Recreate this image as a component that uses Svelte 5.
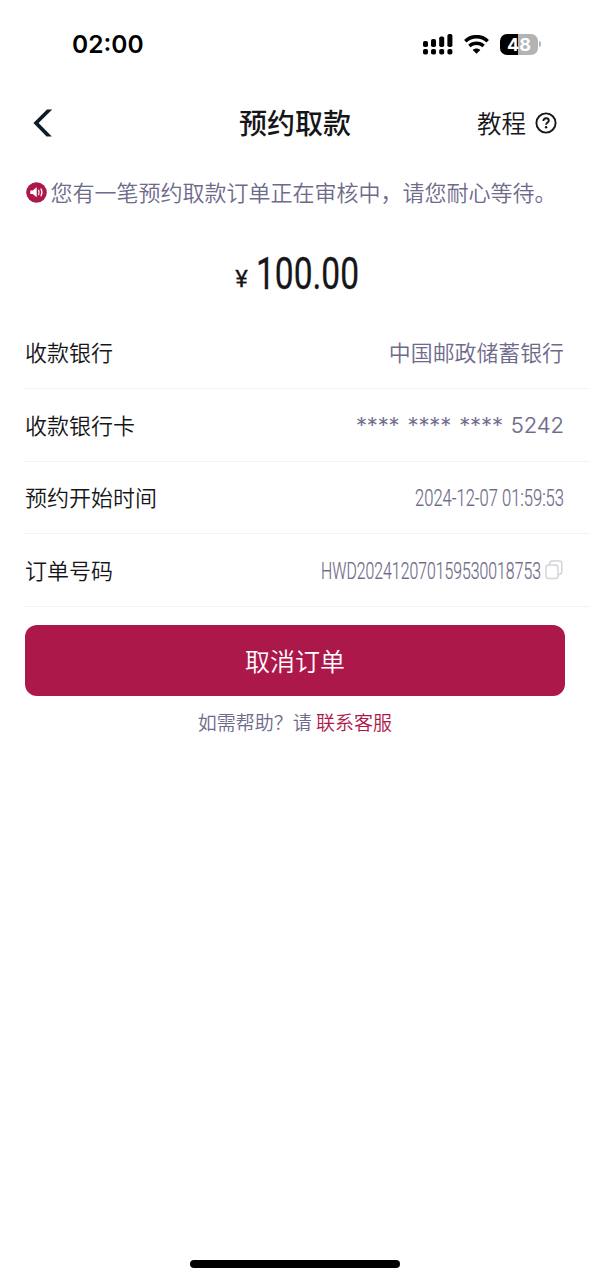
<script>
  const bank = '中国邮政储蓄银行'
  const card = { groups: ['****', '****', '****'], last: '5242' }
  const startTime = '2024-12-07 01:59:53'
  const orderNo = 'HWD202412070159530018753'
</script>

{#snippet condensed(text, width, size, weight)}
  <svg class="condensed" {width} height={size * 1.4} viewBox="0 0 {width} {size * 1.4}">
    <text
      x="0"
      y={size * 1.08}
      font-size={size}
      font-weight={weight}
      textLength={width}
      lengthAdjust="spacingAndGlyphs">{text}</text>
  </svg>
{/snippet}

<div class="page">
  <div class="status">
    <span class="clock">02:00</span>
    <div class="indicators">
      <svg class="signal" width="30" height="21" viewBox="0 0 30 21">
        <rect x="0" y="7" width="5" height="6" rx="1.8" />
        <rect x="8" y="5" width="5" height="8" rx="1.8" />
        <rect x="16.2" y="2.5" width="5" height="10.5" rx="1.8" />
        <rect x="24.4" y="0" width="5" height="13" rx="1.8" />
        <rect x="0" y="15" width="5" height="5.5" rx="1.8" />
        <rect x="8" y="15" width="5" height="5.5" rx="1.8" />
        <rect x="16.2" y="15" width="5" height="5.5" rx="1.8" />
        <rect x="24.4" y="15" width="5" height="5.5" rx="1.8" />
      </svg>
      <svg class="wifi" width="25" height="19" viewBox="0 0 25 19">
        <path d="M1.3 6.2C7.6.1 17.4.1 23.7 6.2" />
        <path d="M5.4 11c4-3.8 10.2-3.8 14.2 0" />
        <path class="dot" d="M12.5 18.8 8.7 15c2.1-2 5.5-2 7.6 0z" />
      </svg>
      <div class="battery"><span>48</span></div>
      <i class="cap"></i>
    </div>
  </div>

  <header>
    <button class="back" aria-label="返回">
      <svg width="20" height="28" viewBox="0 0 20 28">
        <path d="M14 .5h5.2L5.6 14l13.2 13.5h-5.2L.4 14z" />
      </svg>
    </button>
    <h1>预约取款</h1>
    <button class="guide">
      <span>教程</span>
      <svg width="22" height="22" viewBox="0 0 22 22">
        <circle cx="11" cy="11" r="9.6" />
        <path d="M8.4 8.9c0-1.6 1.1-2.6 2.7-2.6s2.7 1 2.7 2.4c0 1.8-2.7 1.9-2.7 4.1" />
        <circle class="dot" cx="11.1" cy="15.3" r="1.2" />
      </svg>
    </button>
  </header>

  <div class="notice">
    <svg width="21" height="21" viewBox="0 0 21 21">
      <circle cx="10.5" cy="10.5" r="10.3" fill="#ad184a" />
      <path d="M4.3 8.5h2.4l4-3.2v10l-4-3.2H4.3z" fill="#fff" />
      <path d="M12.6 8.2q1.2 2.2 0 4.4M15 6.9q2 3.5 0 7" fill="none" stroke="#fff" stroke-width="1.2" stroke-linecap="round" />
    </svg>
    <span>您有一笔预约取款订单正在审核中，请您耐心等待。</span>
  </div>

  <div class="amount">
    <span class="yen">¥</span>
    {@render condensed('100.00', 103, 44, 400)}
  </div>

  <ul>
    <li>
      <span class="label">收款银行</span>
      <span class="value bank">{bank}</span>
    </li>
    <li>
      <span class="label">收款银行卡</span>
      <span class="value card">
        {#each card.groups as group}
          <span class="mask">{group}</span>
        {/each}
        <span>{card.last}</span>
      </span>
    </li>
    <li>
      <span class="label">预约开始时间</span>
      <span class="value">{@render condensed(startTime, 149, 23, 300)}</span>
    </li>
    <li>
      <span class="label">订单号码</span>
      <span class="value order">
        {@render condensed(orderNo, 220, 23, 300)}
        <svg class="copy" width="18" height="20" viewBox="0 0 18 20">
          <rect x="1" y="5" width="12" height="13.4" rx="2.6" />
          <path d="M4.8 4.8V3.4Q4.8 1 7.2 1h7.2q2.4 0 2.4 2.4v8.4q0 2.6-3.6 3" />
        </svg>
      </span>
    </li>
  </ul>

  <button class="cancel">取消订单</button>
  <p class="help">如需帮助？请 <a href="#service">联系客服</a></p>

  <div class="home"></div>
</div>

<style>
  :global(body) {
    background: #fff;
  }

  .page {
    display: flex;
    flex-direction: column;
    width: 590px;
    height: 1280px;
    box-sizing: border-box;
    overflow: hidden;
    color: #16161a;
    font-family: 'Noto Sans CJK SC', sans-serif;
    font-weight: 350;
  }

  button {
    padding: 0;
    border: 0;
    background: none;
    color: inherit;
    font: inherit;
  }

  svg {
    display: block;
    flex: none;
  }

  .status {
    display: flex;
    align-items: center;
    justify-content: space-between;
    height: 88px;
    padding: 0 49px 0 72px;
    color: #000;
  }

  .clock {
    font: 600 24.5px Inter, sans-serif;
  }

  .indicators {
    display: flex;
    align-items: center;
  }

  .wifi {
    margin: 0 11px 0 11px;
    fill: none;
    stroke: #000;
    stroke-width: 3.5;
  }

  .wifi .dot {
    fill: #000;
    stroke: none;
  }

  .battery {
    width: 38px;
    height: 21px;
    border-radius: 7px;
    background: linear-gradient(90deg, #000 48%, #b3b3b3 48%);
    color: #fff;
    font: 700 18px/21px Inter, sans-serif;
    text-align: center;
  }

  .cap {
    width: 2px;
    height: 6px;
    margin-left: 1px;
    border-radius: 0 2px 2px 0;
    background: #b8b8b8;
  }

  header {
    display: grid;
    grid-template-columns: 1fr auto 1fr;
    align-items: center;
    height: 70px;
    padding: 0 33px 0 33px;
  }

  .back {
    justify-self: start;
    fill: #0d1c26;
  }

  h1 {
    margin: 0;
    padding-bottom: 2px;
    font-size: 28px;
    font-weight: 500;
    line-height: 40px;
  }

  .guide {
    display: flex;
    align-items: center;
    justify-self: end;
    gap: 9px;
    font-size: 24.5px;
    line-height: 36px;
  }

  .guide svg {
    fill: none;
    stroke: #16161a;
    stroke-width: 1.9;
  }

  .guide .dot {
    fill: #16161a;
    stroke: none;
  }

  .notice {
    display: flex;
    align-items: center;
    gap: 4px;
    height: 68px;
    padding-left: 25.5px;
    color: #6e6a8a;
    font-size: 22px;
    white-space: nowrap;
  }

  .notice span,
  .label,
  .bank {
    padding-bottom: 2px;
  }

  .condensed {
    overflow: visible;
    fill: currentColor;
    stroke: currentColor;
    stroke-width: 0.2;
    font-family: Roboto, sans-serif;
  }

  .amount {
    display: flex;
    align-items: flex-end;
    justify-content: center;
    gap: 8px;
    height: 77px;
    padding-left: 4px;
  }

  .amount .condensed {
    stroke-width: 0.3;
  }

  .yen {
    margin-bottom: 10px;
    font: 400 24px/28px Roboto, sans-serif;
    -webkit-text-stroke: 0.3px currentColor;
  }

  ul {
    margin: 13.5px 0 0 25px;
    padding: 0;
    list-style: none;
  }

  li {
    display: flex;
    align-items: center;
    justify-content: space-between;
    box-sizing: border-box;
    height: 72.6px;
    padding-right: 26px;
    border-bottom: 1px solid #f2f2f8;
    font-size: 22px;
  }

  .value {
    display: flex;
    align-items: center;
    gap: 4px;
    color: #6e6a8a;
  }

  .bank {
    font-size: 21.9px;
  }

  .card {
    gap: 8px;
    padding-top: 1px;
    font-family: Inter, sans-serif;
    font-size: 22px;
    letter-spacing: -0.1px;
    -webkit-text-stroke: 0.2px currentColor;
  }

  .order {
    padding-right: 1px;
  }

  .copy {
    fill: none;
    stroke: #d3d3da;
    stroke-width: 1.5;
  }

  .cancel {
    flex: none;
    height: 71px;
    margin: 18.5px 25px 0;
    padding-bottom: 1px;
    border-radius: 12px;
    background: #ad184a;
    color: #fff;
    font-size: 25px;
  }

  .help {
    margin: 11.5px 0 0;
    color: #6e6a8a;
    font-size: 19px;
    line-height: 28px;
    text-align: center;
  }

  .help a {
    color: #ad184a;
    text-decoration: none;
  }

  .home {
    width: 210px;
    height: 8px;
    margin: auto auto 12px;
    border-radius: 4px;
    background: #000;
  }
</style>
